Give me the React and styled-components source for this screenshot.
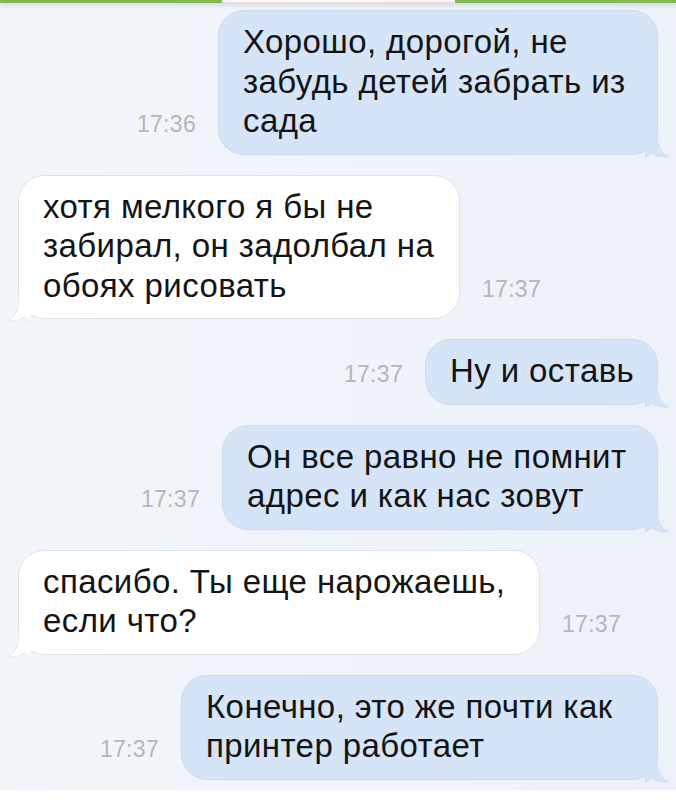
import styled, { createGlobalStyle } from "styled-components";

const messages = [
  { out: true, time: "17:36", width: 440, lines: ["Хорошо, дорогой, не", "забудь детей забрать из", "сада"] },
  { out: false, time: "17:37", width: 442, lines: ["хотя мелкого я бы не", "забирал, он задолбал на", "обоях рисовать"] },
  { out: true, time: "17:37", width: 233, lines: ["Ну и оставь"] },
  { out: true, time: "17:37", width: 436, lines: ["Он все равно не помнит", "адрес и как нас зовут"] },
  { out: false, time: "17:37", width: 522, lines: ["спасибо. Ты еще нарожаешь,", "если что?"] },
  { out: true, time: "17:37", width: 477, lines: ["Конечно, это же почти как", "принтер работает"] },
];

function Tail({ out }) {
  const fill = out ? "#d5e4f7" : "#ffffff";
  return (
    <TailSvg $out={out} width="24" height="24" viewBox="0 0 24 24">
      <path
        d="M0 0 L12 0 C12 11 15 18 23 23 C16 23.5 10.5 21.5 7 19 C5 21 2.5 22.6 0 23 Z"
        fill={fill}
        stroke={out ? "#c9d9ee" : "#dde3ea"}
        strokeWidth="0.8"
      />
      <rect x="-1" y="-1" width="12.6" height="18" fill={fill} />
    </TailSvg>
  );
}

function App() {
  return (
    <>
      <GlobalStyle />
      <Screen>
        <StatusStrip>
          <Green $w="222px" />
          <Notch />
          <Green $grow />
        </StatusStrip>
        <Chat>
          {messages.map((m, i) => (
            <Row key={i} $out={m.out}>
              {m.out && <Time>{m.time}</Time>}
              <Bubble $out={m.out} $w={m.width}>
                {m.lines.map((l, j) => (
                  <Line key={j}>{l}</Line>
                ))}
                <Tail out={m.out} />
              </Bubble>
              {!m.out && <Time>{m.time}</Time>}
            </Row>
          ))}
        </Chat>
      </Screen>
    </>
  );
}

export default App;

const GlobalStyle = createGlobalStyle`
  body {
    margin: 0;
    background: #ffffff;
    font-family: "Liberation Sans", Arial, sans-serif;
  }
`;

const Screen = styled.div`
  width: 676px;
  background: linear-gradient(90deg, #f2f6fb 0%, #edf2f9 100%);
`;

const StatusStrip = styled.div`
  display: flex;
  height: 3px;
  box-shadow: 0 2px 4px rgba(90, 100, 115, 0.25);
  position: relative;
`;

const Green = styled.div`
  width: ${(p) => p.$w || "auto"};
  flex: ${(p) => (p.$grow ? 1 : "none")};
  background: #84b657;
`;

const Notch = styled.div`
  width: 233px;
  background: #fbf7f8;
  border-bottom: 1px solid #e6d9dc;
`;

const Chat = styled.div`
  display: flex;
  flex-direction: column;
  gap: 20px;
  padding: 7px 18px 10px 18px;
`;

const Row = styled.div`
  display: flex;
  justify-content: ${(p) => (p.$out ? "flex-end" : "flex-start")};
  align-items: last baseline;
  gap: 22px;
`;

const Bubble = styled.div`
  position: relative;
  box-sizing: border-box;
  width: ${(p) => p.$w}px;
  padding: 11px 20px 13px 24px;
  border-radius: 26px;
  background: ${(p) => (p.$out ? "#d5e4f7" : "#ffffff")};
  border: 1px solid ${(p) => (p.$out ? "#c9d9ee" : "#dde3ea")};
  color: #141414;
  font-size: 33px;
  line-height: 39.5px;
  letter-spacing: 0.4px;
`;

const Line = styled.div`
  white-space: nowrap;
  position: relative;
  z-index: 1;
`;

const TailSvg = styled.svg`
  position: absolute;
  bottom: -4px;
  ${(p) => (p.$out ? "right: -12px;" : "left: -12px; transform: scaleX(-1);")}
`;

const Time = styled.span`
  font-size: 23px;
  color: #b3b6bb;
  letter-spacing: 0.3px;
`;
